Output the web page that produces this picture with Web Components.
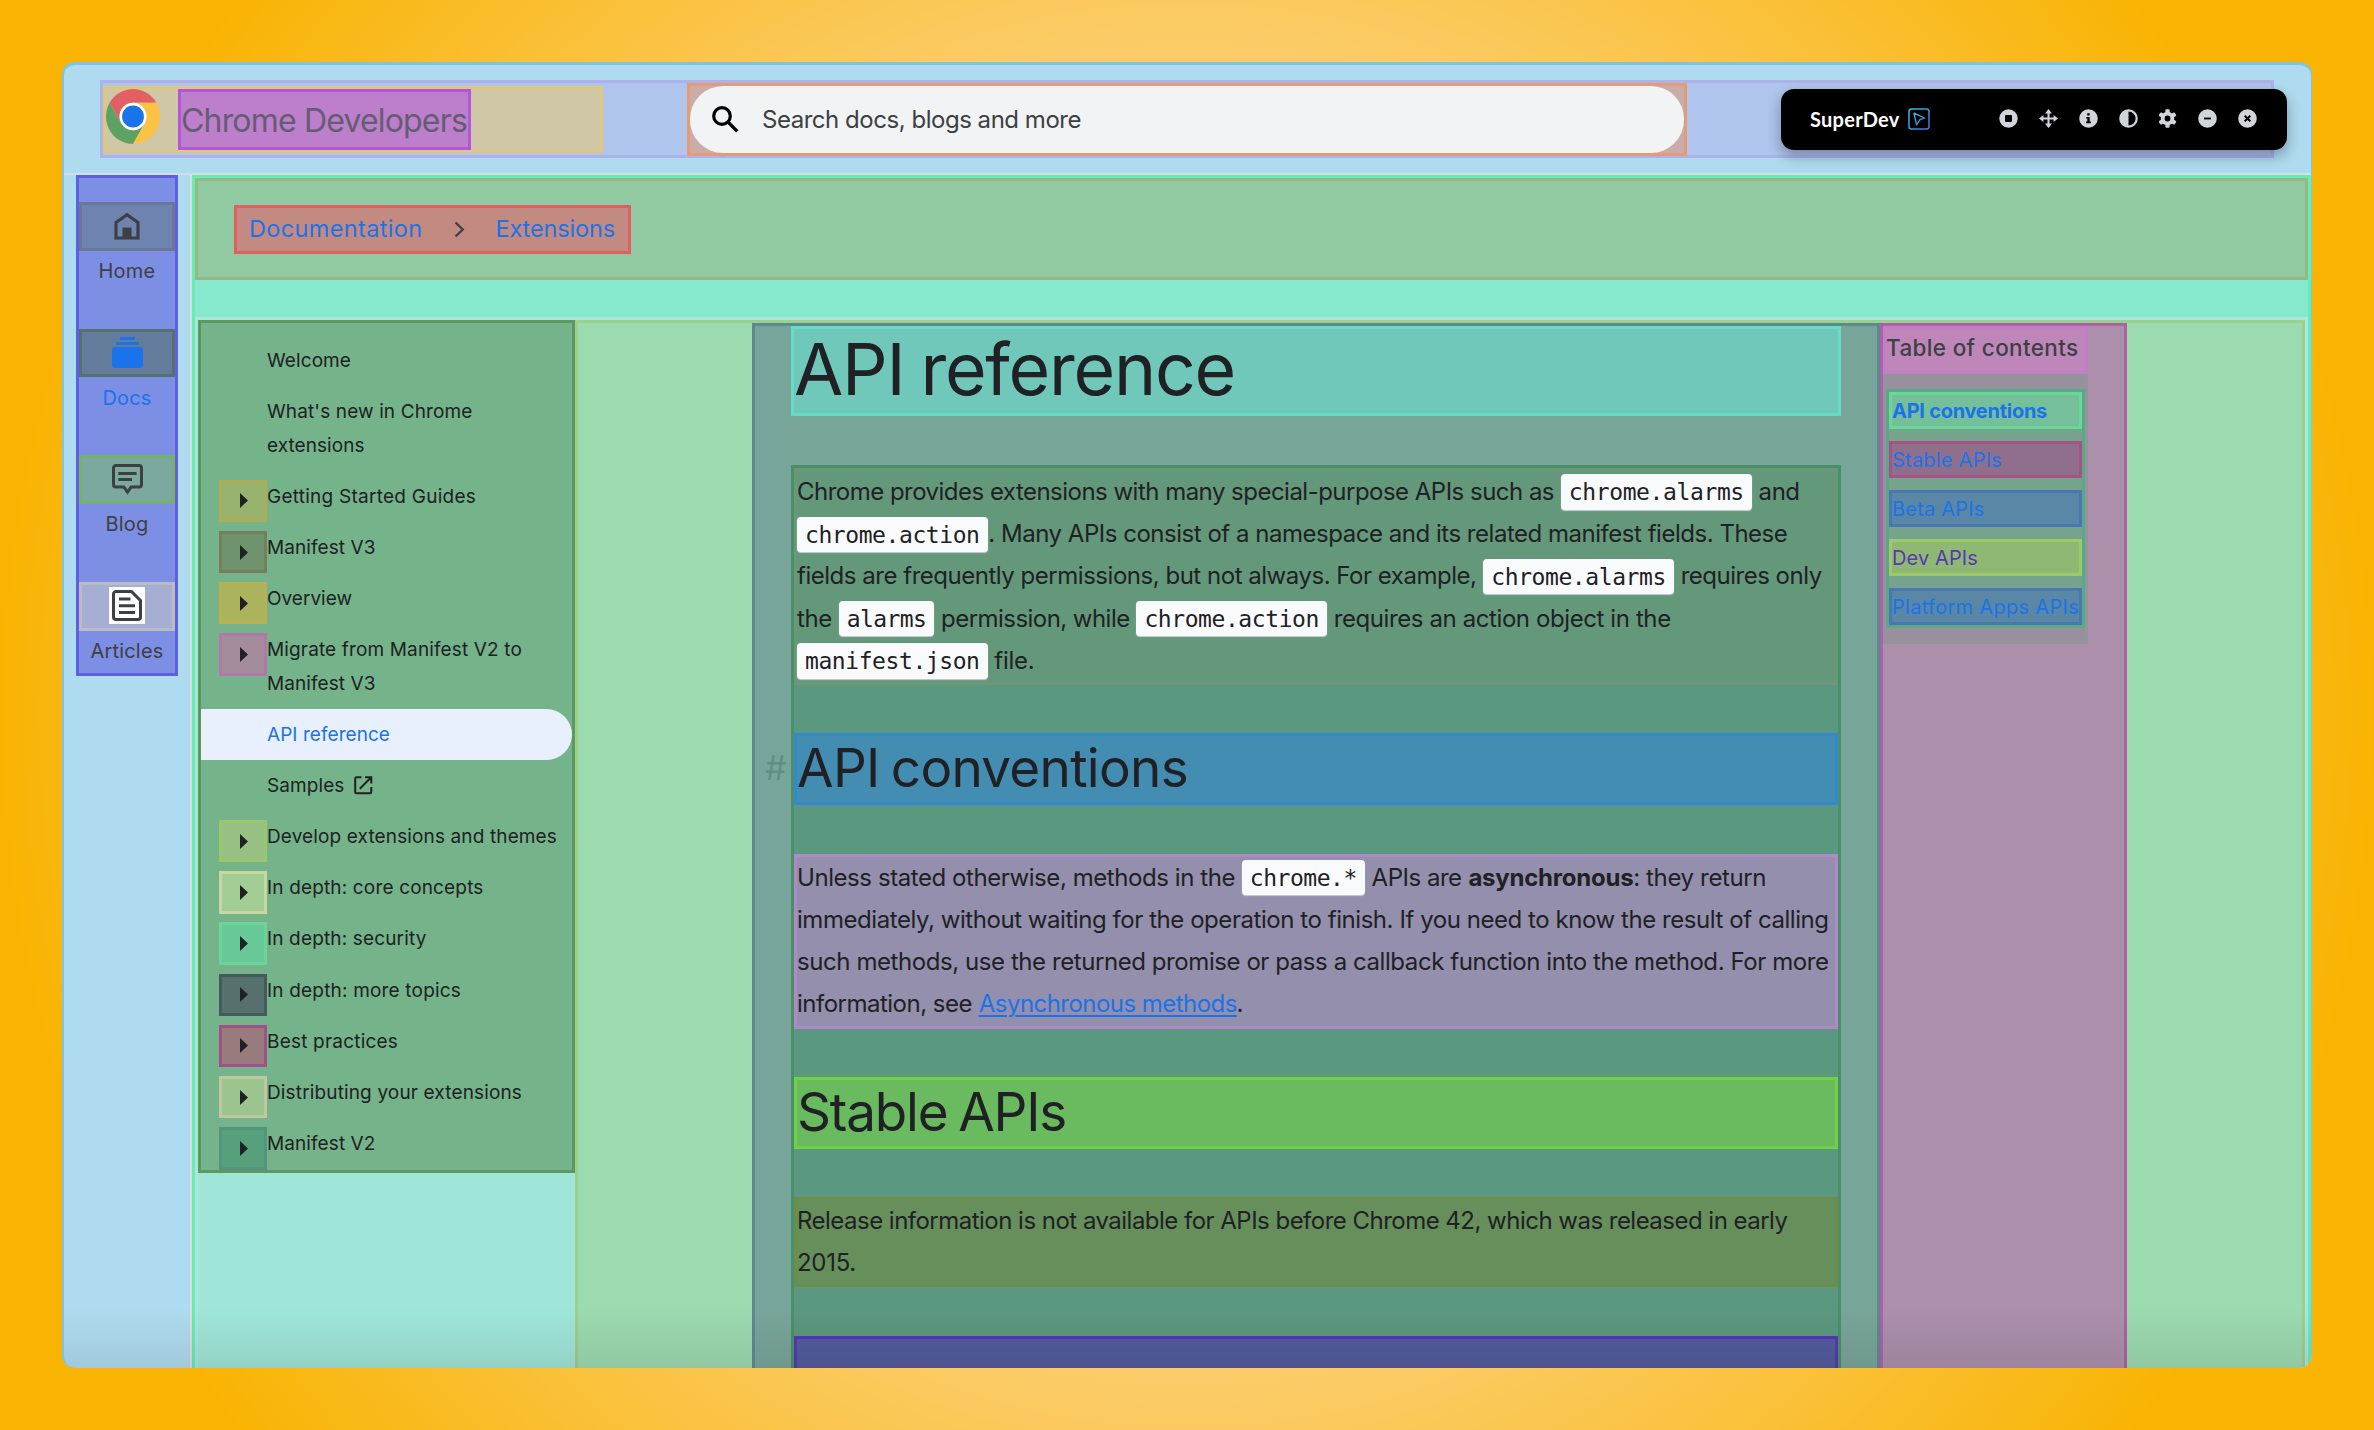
<!DOCTYPE html>
<html lang="en">
<head>
<meta charset="utf-8">
<title>API reference - Chrome Developers</title>
<style>
html,body{margin:0;padding:0;width:2374px;height:1430px;overflow:hidden}
body{font-family:Inter,"Liberation Sans",sans-serif;color:#202124;background:#f9b403}
</style>
</head>
<body>
<docs-page></docs-page>
<script>
const define = (name, css, html) => customElements.define(name, class extends HTMLElement {
  constructor() {
    super();
    this.attachShadow({mode: 'open'}).innerHTML = `<style>*{box-sizing:border-box}:host{display:block;box-sizing:border-box}${css}</style>${html}`;
  }
});
const icons = {
  logo: '<svg width="54" height="55" viewBox="0 0 48 48" preserveAspectRatio="none"><path fill="#e35f63" d="M24 12H44.78A24 24 0 0 0 3.22 12L13.61 30A12 12 0 0 1 24 12Z"/><path fill="#5da263" d="M3.22 12A24 24 0 0 0 24 48L34.39 30A12 12 0 0 1 13.61 30Z"/><path fill="#fbc244" d="M44.78 12A24 24 0 0 1 24 48L34.39 30A12 12 0 0 0 24 12Z"/><circle cx="24" cy="24" r="12" fill="#fff"/><circle cx="24" cy="24" r="9.7" fill="#1a73e8"/></svg>',
  search: '<svg width="27" height="27" viewBox="0 0 27 27" fill="none" stroke="#000" stroke-width="3.2"><circle cx="10" cy="10" r="8.3"/><path d="M16 16L25.3 25.3"/></svg>',
  home: '<svg width="26" height="28" viewBox="0 0 26 28"><path fill="none" stroke="#3c4043" stroke-width="3.2" d="M2 26V10.5L13 2.6L24 10.5V26Z"/><path fill="#3c4043" d="M8.5 15.5h9V26h-9z"/></svg>',
  docs: '<svg width="31" height="31" viewBox="0 0 31 31" fill="#1a73e8"><path d="M8 0h15v3H8zM4 5h23v3H4z"/><rect x="0" y="10" width="31" height="21" rx="3.5"/></svg>',
  blog: '<svg width="31" height="31" viewBox="0 0 31 31" fill="none" stroke="#3c4043" stroke-width="3"><path d="M4 1.5H27A2.5 2.5 0 0 1 29.5 4V20.5A2.5 2.5 0 0 1 27 23H19.2L15.5 28.2L11.8 23H4A2.5 2.5 0 0 1 1.5 20.5V4A2.5 2.5 0 0 1 4 1.5Z"/><path d="M6.3 9.5H24.6M6.3 15.5H20"/></svg>',
  articles: '<svg width="36" height="37" viewBox="0 0 36 37"><path fill="#fcfdff" d="M0 0h36v37H0z"/><g fill="none" stroke="#3c4043" stroke-width="3"><path d="M7 4.5H22.5L31.5 13.5V30A2.5 2.5 0 0 1 29 32.5H7A2.5 2.5 0 0 1 4.5 30V7A2.5 2.5 0 0 1 7 4.5Z"/><path d="M10 12H21.5M10 18.8H26M10 25.5H26"/></g></svg>',
  chevron: '<svg width="11" height="17" viewBox="0 0 11 17" fill="none" stroke="#3c4043" stroke-width="2.2"><path d="M1.5 1.5L8.8 8.5L1.5 15.5"/></svg>',
  external: '<svg width="19" height="19" viewBox="0 0 19 19" fill="none" stroke="#202124" stroke-width="2"><path d="M7.5 1.2H2.5A1.3 1.3 0 0 0 1.2 2.5V16A1.3 1.3 0 0 0 2.5 17.3H16A1.3 1.3 0 0 0 17.3 16V11M11 1.2H17.3V7.5M17 1.5L5.8 12.8"/></svg>',
  arrow: '<svg width="8" height="15" viewBox="0 0 8 15"><path fill="#202124" d="M0 0L8 7.5L0 15Z"/></svg>',
  cursor: '<svg width="22" height="22" viewBox="0 0 22 22" fill="none"><defs><linearGradient id="g" x1="0" y1="0" x2="1" y2="1"><stop stop-color="#2fc5dc"/><stop offset="1" stop-color="#4b6fd8"/></linearGradient></defs><rect x="1" y="1" width="20" height="20" rx="2.5" stroke="url(#g)" stroke-width="1.5"/><path stroke="url(#g)" stroke-width="1.4" stroke-linejoin="round" d="M6 5.2L16.6 10.2L12 11.6L8.6 16.8Z"/></svg>',
  stop: '<svg width="19" height="19" viewBox="0 0 19 19"><circle cx="9.5" cy="9.5" r="9.2" fill="#d1d5db"/><rect x="6" y="6" width="7" height="7" rx="1" fill="#000"/></svg>',
  move: '<svg width="19" height="19" viewBox="0 0 19 19" fill="#d1d5db"><path d="M9.5 0L13 4.4H10.5V8.5H14.6V6L19 9.5L14.6 13V10.5H10.5V14.6H13L9.5 19L6 14.6H8.5V10.5H4.4V13L0 9.5L4.4 6V8.5H8.5V4.4H6Z"/></svg>',
  info: '<svg width="19" height="19" viewBox="0 0 19 19"><circle cx="9.5" cy="9.5" r="9.3" fill="#d1d5db"/><path d="M8.2 4.2h2.5v2.3H8.2zM7.2 8h3.5v4.6h1.2v1.7H7v-1.7h1.3V9.6H7.2z"/></svg>',
  contrast: '<svg width="19" height="19" viewBox="0 0 19 19"><circle cx="9.5" cy="9.5" r="8.2" fill="none" stroke="#d1d5db" stroke-width="2.2"/><path fill="#d1d5db" d="M9.5 1V18A8.5 8.5 0 0 1 9.5 1Z"/></svg>',
  gear: '<svg width="19" height="19" viewBox="0 0 19 19"><g fill="#d1d5db"><circle cx="9.5" cy="9.5" r="6.8"/><rect x="7.4" y="0.3" width="4.2" height="18.4" rx="1"/><rect x="7.4" y="0.3" width="4.2" height="18.4" rx="1" transform="rotate(60 9.5 9.5)"/><rect x="7.4" y="0.3" width="4.2" height="18.4" rx="1" transform="rotate(120 9.5 9.5)"/></g><circle cx="9.5" cy="9.5" r="2.9"/></svg>',
  minus: '<svg width="19" height="19" viewBox="0 0 19 19"><circle cx="9.5" cy="9.5" r="9.3" fill="#d1d5db"/><path d="M6 8.6h7v1.8H6z"/></svg>',
  close: '<svg width="19" height="19" viewBox="0 0 19 19"><circle cx="9.5" cy="9.5" r="9.3" fill="#d1d5db"/><path stroke="#000" stroke-width="2" d="M6.7 6.7L12.3 12.3M12.3 6.7L6.7 12.3"/></svg>'
};

/* Outlined, tinted region around any content. */
define('hl-box', ':host{border:3px solid var(--bd);background:var(--bg)}', '<slot></slot>');

customElements.define('ui-icon', class extends HTMLElement {
  constructor() {
    super();
    this.attachShadow({mode: 'open'}).innerHTML = '<style>:host{display:block;flex:none;line-height:0}svg{display:block}</style>' + (icons[this.getAttribute('name')] || '');
  }
});

define('code-pill', ':host{flex:none;height:35.5px;margin-top:3.4px;padding:0 8px;background:#f9fafc;border-radius:4px;box-shadow:0 1px 1px #c9ced6;font:23px/36px "DejaVu Sans Mono",monospace}', '<slot></slot>');
define('text-line', ':host{display:flex;gap:6.8px;height:42.2px;line-height:42.4px;font-size:24px}', '<slot></slot>');

define('site-header', `
:host{height:110px;padding:15px 0 0 36px;border-bottom:2px solid #d3dfe4}
.nav{--bg:#afc5ed;--bd:#acb3ea;width:2174px;height:78px;display:flex}
.brand{--bg:#cfc7a6;--bd:#e0c878;width:500px;height:66.5px;margin-top:3px;display:flex}
.title{--bg:#bd7ecb;--bd:#b456dc;margin-left:18px;width:292.5px;height:60.5px;font-size:32px;line-height:57px;color:#635d72}
.search{--bg:#cbacab;--bd:#e39c74;width:1000px;height:72.6px;margin-left:84px;flex:none}
.pill{height:66.6px;border-radius:33px;background:#f1f3f4;display:flex;align-items:center;padding-left:22px;font-size:24px;color:#3c4043}
.pill fit-text{margin-left:23px}`,
`<hl-box class="nav"><hl-box class="brand"><ui-icon name="logo"></ui-icon><hl-box class="title"><fit-text w="286">Chrome Developers</fit-text></hl-box></hl-box>
<hl-box class="search"><div class="pill"><ui-icon name="search"></ui-icon><fit-text w="319">Search docs, blogs and more</fit-text></div></hl-box></hl-box>`);

define('dev-toolbar', `
:host{position:absolute;left:1781px;top:89px;width:506px;height:61px;border-radius:13px;background:#000;box-shadow:0 6px 14px rgba(0,0,30,.32);display:flex;align-items:center;padding:0 30px 0 29px;color:#fff;font:700 20px Lato,Inter,sans-serif}
.sp{flex:1}.row{display:flex;gap:20.8px}ui-icon.c{margin-left:8px;margin-top:-1px}.row{margin-top:-2px}fit-text{margin-top:-2px}`,
`<fit-text w="89.500">SuperDev</fit-text><ui-icon class="c" name="cursor"></ui-icon><span class="sp"></span><div class="row">${['stop','move','info','contrast','gear','minus','close'].map(n => `<ui-icon name="${n}"></ui-icon>`).join('')}</div>`);

const rail = [['home','Home',57,'#6f83b0','#6a7795'],['docs','Docs',49,'#647c9c','#55716d'],['blog','Blog',43,'#7ba89f','#77b26a'],['articles','Articles',73,'#a6afd3','#bcbcc0']];
define('icon-rail', `
:host{width:128px;border-right:2px solid #d8dfe3;padding-left:12px}
.box{--bg:#7d8fe4;--bd:#5f60df;width:102px;height:500.6px;padding-top:24.3px}
.item{height:126.6px;font-size:20px;line-height:36px;text-align:center;color:#3c4043}
.item:nth-child(2){color:#1a73e8}
.ic{height:48.600px;display:flex;align-items:center;justify-content:center;margin-bottom:2.4px;padding-bottom:1.500px}
.lb{display:flex;justify-content:center}`,
`<hl-box class="box">${rail.map(r => `<div class="item"><hl-box class="ic" style="--bg:${r[3]};--bd:${r[4]}"><ui-icon name="${r[0]}"></ui-icon></hl-box><div class="lb"><fit-text w="${r[2]}">${r[1]}</fit-text></div></div>`).join('')}</hl-box>`);

define('crumb-bar', `
:host{height:102.3px;border:3px solid #97b786;background:#91caa1;padding:24.3px 0 0 36px}
.c{--bg:#c38a82;--bd:#e35e62;width:396.5px;height:48.3px;display:flex;align-items:center;padding-left:12px;font-size:23.5px;line-height:36px;color:#1a73e8}
ui-icon{margin:0 30px 0 32px}fit-text{margin-top:-1px}`,
`<hl-box class="c"><fit-text w="173.500">Documentation</fit-text><ui-icon name="chevron"></ui-icon><fit-text w="119.500">Extensions</fit-text></hl-box>`);

const side = [
 [[['Welcome',84]]],
 [[["What's new in Chrome",205.5],['extensions',97.5]]],
 [[['Getting Started Guides',209]],'#97b36d','#adad57'],
 [[['Manifest V3',108.5]],'#6f936d','#757f60'],
 [[['Overview',85]],'#abb35c','#b8b052'],
 [[['Migrate from Manifest V2 to',255],['Manifest V3',108.5]],'#a58c9c','#b478a8'],
 [[['API reference',123]],'sel'],
 [[['Samples',77.5]],'ext'],
 [[['Develop extensions and themes',290]],'#98c083','#9cc66e'],
 [[['In depth: core concepts',216.5]],'#a2cd95','#c6d8a0'],
 [[['In depth: security',159.5]],'#68c998','#6cd39a'],
 [[['In depth: more topics',194]],'#56706d','#455a5e'],
 [[['Best practices',131]],'#997b7d','#a2508a'],
 [[['Distributing your extensions',255]],'#9cc48e','#c0c7a0'],
 [[['Manifest V2',108.5]],'#57a07c','#529680']];
define('side-nav', `
:host{width:377px;height:853px;flex:none;border:3px solid #5c9860;background:#75b38a;padding-top:12.3px}
.i{display:flex;min-height:51.2px;padding:8.8px 0 8.800px 18px;line-height:33.4px;font-size:19px}
.ar{width:48px;height:42.4px;display:flex;align-items:center;justify-content:center;flex:none;margin-bottom:-20px}
.ar ui-icon{margin-left:2px}
.no{width:48px;flex:none}
.sel{background:#e8f0fe;border-radius:0 26px 26px 0;color:#1a73e8}
.t{display:flex;flex-direction:column}
.ext{margin:7px 0 0 9px}`,
side.map(s => {
  const tint = s[2];
  return `<div class="i ${s[1] === 'sel' ? 'sel' : ''}">${tint ? `<hl-box class="ar" style="--bg:${s[1]};--bd:${s[2]}"><ui-icon name="arrow"></ui-icon></hl-box>` : '<span class="no"></span>'}<div class="t">${s[0].map(l => `<fit-text w="${l[1]}">${l[0]}</fit-text>`).join('')}</div>${s[1] === 'ext' ? '<ui-icon class="ext" name="external"></ui-icon>' : ''}</div>`;
}).join(''));

define('doc-article', `
:host{width:1128px;flex:none;border:3px solid #5f8890;border-bottom:0;background:#78a59a;padding-left:36px}
h1,h2,p{margin:0;font-weight:400}
.h1{--bg:#70c8ba;--bd:#65dcc6;width:1050px;height:90.5px}
h1{font-size:71.500px;line-height:80.500px;word-spacing:-3px}
.body{--bg:#5a987f;--bd:#4a8f6a;width:1050px;margin-top:48.500px;height:960px}
.p1{--bg:#64987b;--bd:#6a9878;height:217px}
.h2{height:72.400px;position:relative}
h2{font-size:53px;line-height:64px;word-spacing:-3px}
.a{--bg:#438db3;--bd:#3488d0;margin-top:48px}
.hash{position:absolute;left:-32px;top:1px;font-size:34px;line-height:62px;color:#5f8f80}
.p2{--bg:#938fad;--bd:#b088c8;height:175px;margin-top:48.200px}
.b{--bg:#6aba60;--bd:#72d045;margin-top:48px}
.p3{--bg:#668f5b;--bd:#6b8f47;height:90.400px;margin-top:48.100px}
.c{--bg:#525b9d;--bd:#5538b8;height:80px;margin-top:48.300px}
a{color:#1a73e8;text-decoration:underline;text-decoration-thickness:2px;text-underline-offset:3px}`,
`<hl-box class="h1"><h1><fit-text w="441">API reference</fit-text></h1></hl-box>
<hl-box class="body">
<hl-box class="p1">
<text-line><fit-text w="757">Chrome provides extensions with many special-purpose APIs such as</fit-text><code-pill><fit-text w="175">chrome.alarms</fit-text></code-pill><fit-text w="41">and</fit-text></text-line>
<text-line><code-pill><fit-text w="174.500">chrome.action</fit-text></code-pill><fit-text w="799" style="margin-left:-6px">. Many APIs consist of a namespace and its related manifest fields. These</fit-text></text-line>
<text-line><fit-text w="679.500">fields are frequently permissions, but not always. For example,</fit-text><code-pill><fit-text w="174.500">chrome.alarms</fit-text></code-pill><fit-text w="141">requires only</fit-text></text-line>
<text-line><fit-text w="35">the</fit-text><code-pill><fit-text w="79.500">alarms</fit-text></code-pill><fit-text w="188.500">permission, while</fit-text><code-pill><fit-text w="174.500">chrome.action</fit-text></code-pill><fit-text w="337">requires an action object in the</fit-text></text-line>
<text-line><code-pill><fit-text w="174.500">manifest.json</fit-text></code-pill><fit-text w="40">file.</fit-text></text-line>
</hl-box>
<hl-box class="h2 a"><span class="hash">#</span><h2><fit-text w="391">API conventions</fit-text></h2></hl-box>
<hl-box class="p2">
<text-line><fit-text w="438">Unless stated otherwise, methods in the</fit-text><code-pill><fit-text w="107">chrome.*</fit-text></code-pill><fit-text w="90">APIs are</fit-text><fit-text w="165" style="font-weight:700">asynchronous</fit-text><fit-text w="133" style="margin-left:-7px">: they return</fit-text></text-line>
<text-line><fit-text w="1031.500">immediately, without waiting for the operation to finish. If you need to know the result of calling</fit-text></text-line>
<text-line><fit-text w="1031.500">such methods, use the returned promise or pass a callback function into the method. For more</fit-text></text-line>
<text-line><fit-text w="175">information, see</fit-text><a><fit-text w="258">Asynchronous methods</fit-text></a><fit-text w="6" style="margin-left:-7px">.</fit-text></text-line>
</hl-box>
<hl-box class="h2 b"><h2><fit-text w="269">Stable APIs</fit-text></h2></hl-box>
<hl-box class="p3">
<text-line><fit-text w="990.500">Release information is not available for APIs before Chrome 42, which was released in early</fit-text></text-line>
<text-line><fit-text w="59">2015.</fit-text></text-line>
</hl-box>
<hl-box class="c"></hl-box>
</hl-box>`);

const toc = [['API conventions',155,'#75c09a','#6bd69a','b'],['Stable APIs',110,'#906f8c','#a55289'],['Beta APIs',92.5,'#5a87a6','#4878b2'],['Dev APIs',86,'#8fb873','#9fc86d','v'],['Platform Apps APIs',187,'#5a87a6','#4878b2']];
define('page-toc', `
:host{width:247px;flex:none;border:3px solid #b060a8;border-bottom:0;background:#ab8fab}
.t{--bg:#bf87b9;--bd:#c07fc6;width:205px;height:48px;font-size:22.500px;font-weight:500;color:#3c4043;line-height:40px}
.g{--bg:#98909d;--bd:#94949c;width:205px;height:269.700px;padding-top:12.300px}
.l{--bg:#75a38c;--bd:#5aa888;height:239px;width:199px;display:flex;flex-direction:column;gap:12px}
.i{height:37px;line-height:34px;font-size:20px;color:#1a73e8}
.i fit-text{margin-top:-1px}
.t fit-text{margin-top:-.500px}
.b{font-weight:700}.v{color:#5738b5}`,
`<hl-box class="t"><fit-text w="192.500">Table of contents</fit-text></hl-box><hl-box class="g"><hl-box class="l">${toc.map(t => `<hl-box class="i ${t[4] || ''}" style="--bg:${t[2]};--bd:${t[3]}"><fit-text w="${t[1]}">${t[0]}</fit-text></hl-box>`).join('')}</hl-box></hl-box>`);

define('docs-page', `
:host{width:2374px;height:1430px;padding:62px;position:relative;background:radial-gradient(circle 1187px at 50% 50%,#feeaea,#f9b403)}
.win{width:2250px;height:1306px;border-radius:13px;overflow:hidden;background:#aedbef;border:solid #7cc5e3;border-width:3px 1px 0 2px;position:relative;display:flex;flex-direction:column}
.row{display:flex;flex:1;min-height:0}
.main{flex:1;border:3px solid #67edb2;border-bottom:0;background:#86e8cc;display:flex;flex-direction:column;min-width:0}
.cols{flex:1;min-height:0;margin-top:36.700px;border:3px solid #aae6da;border-bottom:0;background:#9fe6d8;display:flex}
.grid{flex:1;border:3px solid #9bd18f;border-bottom:0;background:#9cdab0;display:flex;padding-left:174px;min-width:0}
.shade{position:absolute;left:0;right:0;bottom:0;height:60px;background:linear-gradient(transparent,rgba(30,20,20,.09))}`,
`<div class="win"><site-header></site-header><div class="row"><icon-rail></icon-rail><div class="main"><crumb-bar></crumb-bar><div class="cols"><side-nav></side-nav><div class="grid"><doc-article></doc-article><page-toc></page-toc></div></div></div></div><div class="shade"></div></div><dev-toolbar></dev-toolbar>`);

/* A single line of text tracked to an exact measure. */
customElements.define('fit-text', class extends HTMLElement {
  connectedCallback() {
    if (this.shadowRoot) return;
    this.attachShadow({mode: 'open'}).innerHTML = '<style>:host{display:block;flex:none;white-space:pre}span{display:inline-block}</style><span><slot></slot></span>';
    const s = this.shadowRoot.querySelector('span'), w = +this.getAttribute('w');
    const natural = s.getBoundingClientRect().width;
    if (this.closest('a')) s.style.display = 'inline';
    this.style.letterSpacing = ((w - natural) / this.textContent.length).toFixed(3) + 'px';
  }
});
</script>
</body>
</html>
